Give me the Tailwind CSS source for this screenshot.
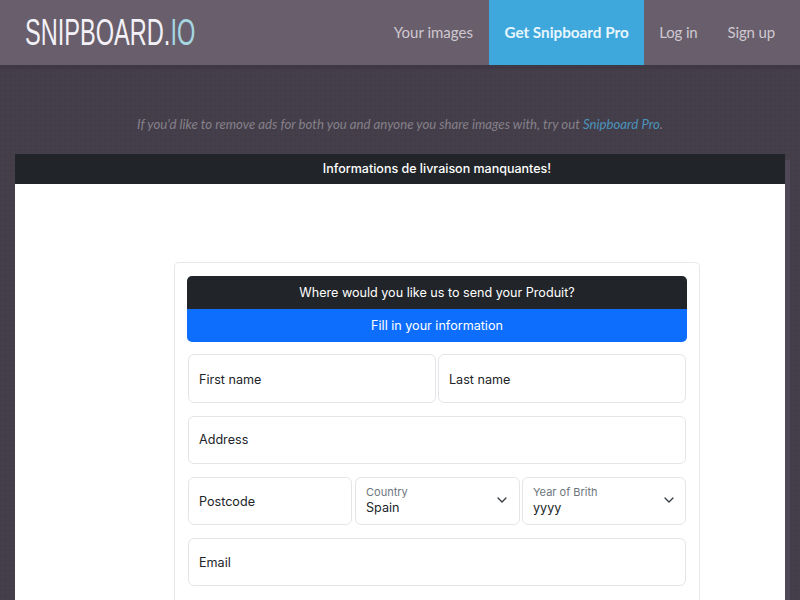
<!DOCTYPE html>
<html>
<head>
<meta charset="utf-8">
<script src="https://cdn.jsdelivr.net/npm/@tailwindcss/browser@4"></script>
</head>
<body class="h-[600px] overflow-hidden bg-[#453f4b] bg-[linear-gradient(rgba(0,0,0,0.04)_1px,transparent_1px),linear-gradient(90deg,rgba(0,0,0,0.04)_1px,transparent_1px)] bg-[size:5px_5px] font-['Lato',sans-serif]">
<header class="flex h-[65px] items-stretch justify-between bg-[#695e6b] shadow-[0_4px_0_#3f3945]">
  <div class="flex items-center pl-[25px]"><div class="origin-left scale-x-[0.637] whitespace-nowrap font-['Liberation_Sans',sans-serif] text-[37px] leading-none text-[#f3f1f8]">SNIPBOARD.<span class="text-[#a5d6e2]">IO</span></div></div>
  <nav class="flex items-stretch text-[15px] text-[#cfc9d1]">
    <a class="flex items-center pl-[15px] pr-[16px]">Your images</a>
    <a class="flex items-center bg-[#3ea8dc] px-[15.5px] text-[15.25px] font-bold text-[#e8f6fc]">Get Snipboard Pro</a>
    <a class="flex items-center pl-[15px] pr-[15px] tracking-[-0.15px]">Log in</a>
    <a class="flex items-center pl-[15px] pr-[25px] tracking-[-0.15px]">Sign up</a>
  </nav>
</header>
<p class="mt-[50px] text-center text-[13.2px] leading-[18px] italic text-[#85808a]">If you'd like to remove ads for both you and anyone you share images with, try out <span class="text-[#4a94bd]">Snipboard Pro</span>.</p>
<main class="mx-[15px] mt-[21px] h-[446px] bg-white shadow-[5px_6px_0_rgba(80,73,88,0.9)] font-['Inter',sans-serif]">
  <div class="flex h-[30px] items-center justify-center bg-[#212529] pl-[74px] text-[12.5px] font-medium text-white">Informations de livraison manquantes!</div>
  <div class="ml-[159px] mt-[78px] h-[338px] w-[526px] rounded-t-[5px] border border-b-0 border-[#e8e8e8] px-[12px] pt-[13px] text-[12.6px] text-[#212529]">
    <div class="overflow-hidden rounded-[5px] text-white">
      <div class="flex h-[33px] items-center justify-center bg-[#212529] pt-[2px] text-[12.6px]">Where would you like us to send your Produit?</div>
      <div class="flex h-[33px] items-center justify-center bg-[#0d6efd] pt-[2px]">Fill in your information</div>
    </div>
    <div class="mt-[12px] flex flex-col gap-[13px] px-px">
      <div class="flex gap-[2px]">
        <div class="flex h-[49px] flex-1 items-center rounded-[6px] border border-[#e3e5e8] px-[10px] pt-[3px]">First name</div>
        <div class="flex h-[49px] flex-1 items-center rounded-[6px] border border-[#e3e5e8] px-[10px] pt-[3px]">Last name</div>
      </div>
      <div class="flex h-[48px] items-center rounded-[6px] border border-[#e3e5e8] px-[10px] pt-[1px]">Address</div>
      <div class="flex gap-[3px]">
        <div class="flex h-[48px] w-[164px] items-center rounded-[6px] border border-[#e3e5e8] px-[10px] pt-[2px]">Postcode</div>
        <div class="relative h-[48px] w-[165px] rounded-[6px] border border-[#e3e5e8] px-[10px] pt-[7px]">
          <div class="text-[11px] leading-[14px] text-[#6c757d]">Country</div>
          <div class="leading-[17px]">Spain</div>
          <svg class="absolute right-[11px] top-[17px] h-[10px] w-[12px]" viewBox="0 0 12 10" fill="none" stroke="#343a40" stroke-width="1.3" stroke-linecap="round" stroke-linejoin="round"><path d="M2 3l4 4 4-4"/></svg>
        </div>
        <div class="relative -ml-px h-[48px] w-[164px] rounded-[6px] border border-[#e3e5e8] px-[10px] pt-[7px]">
          <div class="text-[11px] leading-[14px] text-[#6c757d]">Year of Brith</div>
          <div class="leading-[17px]">yyyy</div>
          <svg class="absolute right-[10px] top-[17px] h-[10px] w-[12px]" viewBox="0 0 12 10" fill="none" stroke="#343a40" stroke-width="1.3" stroke-linecap="round" stroke-linejoin="round"><path d="M2 3l4 4 4-4"/></svg>
        </div>
      </div>
      <div class="flex h-[48px] items-center rounded-[6px] border border-[#e3e5e8] px-[10px] pt-[2px]">Email</div>
    </div>
  </div>
</main>
</body>
</html>
